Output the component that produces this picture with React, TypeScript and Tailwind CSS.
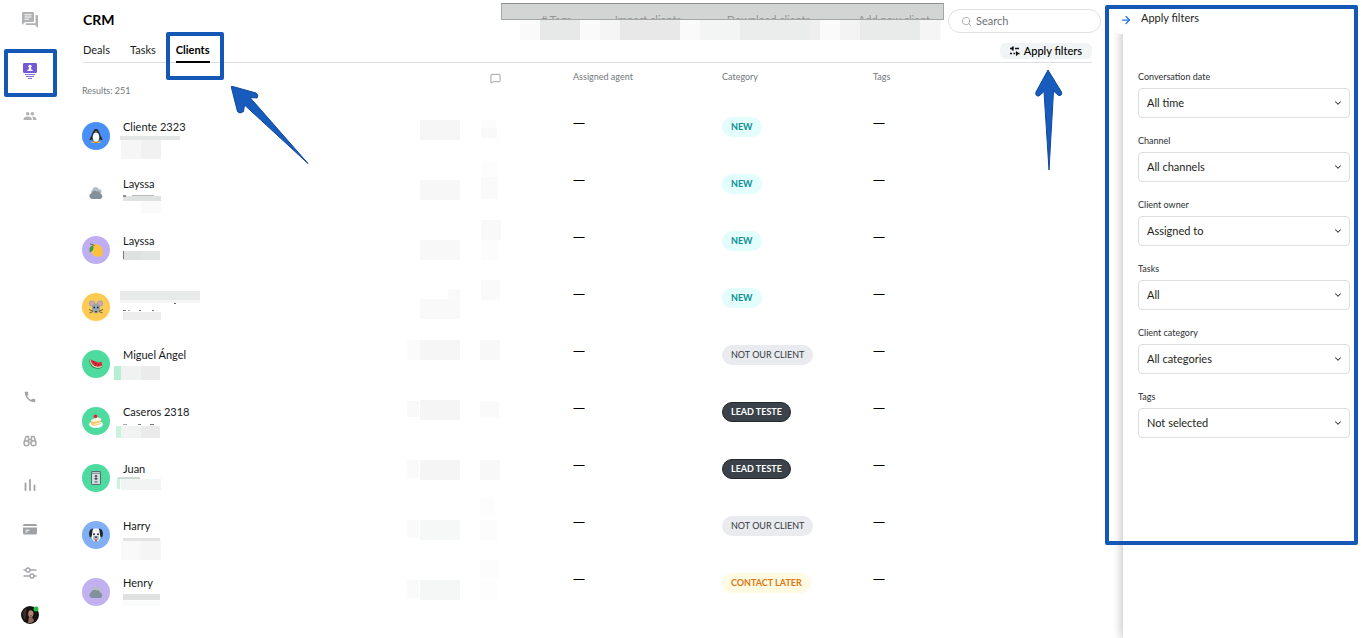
import type { ReactNode } from "react";
import clsx from "clsx";
import { MdCall, MdPeople } from "react-icons/md";
import { ArrowRight, ChevronDown, MessageSquare, Search } from "lucide-react";

type Rect = [x: number, y: number, width: number, height: number, fill: string];

const tabs = [
  { name: "Deals", current: false },
  { name: "Tasks", current: false },
  { name: "Clients", current: true },
];

const actions = [
  { name: "# Tags", className: "w-[110px]" },
  { name: "Import clients", className: "w-[74px]" },
  { name: "Download clients", className: "flex-1" },
  { name: "Add new client", className: "w-[84px]" },
];

const badgeStyles: Record<string, string> = {
  NEW: "px-[9px] bg-[#e3fdfc] text-[#0a8f92] font-bold",
  "NOT OUR CLIENT": "px-[9px] bg-[#e9ebee] text-[#343a40]",
  "LEAD TESTE": "px-2 border border-[#23282d] bg-[#3b4249] text-white font-bold",
  "CONTACT LATER": "px-[9px] bg-[#fffbe3] text-[#e0760f] font-bold",
};

const clients = [
  { name: "Cliente 2323", category: "NEW", avatar: "penguin", color: "bg-[#4a8ff5]" },
  { name: "Layssa", category: "NEW", avatar: "clouds", color: "bg-white" },
  { name: "Layssa", category: "NEW", avatar: "lemon", color: "bg-[#c0aef3]" },
  { name: "", category: "NEW", avatar: "mouse", color: "bg-[#fccb53]" },
  { name: "Miguel Ángel", category: "NOT OUR CLIENT", avatar: "melon", color: "bg-[#4edb9f]" },
  { name: "Caseros 2318", category: "LEAD TESTE", avatar: "cake", color: "bg-[#4edb9f]" },
  { name: "Juan", category: "LEAD TESTE", avatar: "bin", color: "bg-[#4edb9f]" },
  { name: "Harry", category: "NOT OUR CLIENT", avatar: "dog", color: "bg-[#80aff5]" },
  { name: "Henry", category: "CONTACT LATER", avatar: "clouds", color: "bg-[#c2b0f0]" },
];

const filters = [
  { id: "date", label: "Conversation date", value: "All time" },
  { id: "channel", label: "Channel", value: "All channels" },
  { id: "owner", label: "Client owner", value: "Assigned to" },
  { id: "tasks", label: "Tasks", value: "All" },
  { id: "category", label: "Client category", value: "All categories" },
  { id: "tags", label: "Tags", value: "Not selected" },
];

// censored areas of the list, measured from the top left of the table
const listMosaic: Rect[] = [
  [38, 73, 60, 4, "#e4e6e6"], [39, 77, 40, 19, "#f6f6f6"], [59, 77, 20, 19, "#f1f1f1"],
  [41, 133, 38, 5, "#e0e1e1"], [41, 132, 3, 2, "#8c9093"], [50, 132, 22, 1, "#b9bcbe"], [59, 138, 20, 12, "#fafafa"],
  [41, 188, 37, 9, "#dfe0e0"], [41, 188, 1, 8, "#777b7e"], [59, 188, 19, 9, "#e3e4e4"],
  [38, 228, 80, 9, "#e8e9e9"], [38, 237, 80, 3, "#f5f5f5"], [92, 240, 2, 1, "#666666"],
  [41, 247, 3, 1, "#777b7e"], [46, 247, 2, 1, "#a5a8aa"], [57, 247, 2, 1, "#777b7e"], [70, 247, 2, 1, "#777b7e"], [41, 249, 38, 8, "#ededed"],
  [32, 303, 7, 14, "#b5efd4"], [39, 303, 20, 14, "#f0f2f2"], [59, 303, 19, 14, "#ebebeb"],
  [41, 361, 4, 1, "#a5a8aa"], [56, 361, 3, 1, "#777b7e"], [68, 361, 4, 1, "#777b7e"], [34, 363, 5, 12, "#c9f2df"], [39, 363, 20, 12, "#f1f3f3"], [59, 363, 19, 12, "#ebebeb"],
  [35, 415, 3, 11, "#c9f2df"], [36, 414, 22, 2, "#cbdcd5"], [39, 416, 40, 11, "#f2f3f3"],
  [41, 475, 37, 3, "#e3e3e3"], [39, 478, 20, 19, "#f9f9f9"], [59, 478, 20, 19, "#f5f5f5"],
  [41, 531, 37, 6, "#e0e2e1"], [41, 538, 37, 5, "#fafbfb"],
  [338, 57, 40, 20, "#f6f6f6"], [338, 117, 40, 20, "#f7f7f7"], [338, 177, 40, 20, "#f8f8f8"],
  [366, 226, 12, 10, "#fafafa"], [338, 236, 40, 20, "#f9f9f9"],
  [325, 277, 13, 20, "#fbfbfb"], [338, 277, 40, 20, "#f6f6f6"],
  [325, 338, 12, 16, "#f9f9f9"], [338, 337, 40, 20, "#f5f5f5"],
  [325, 397, 12, 18, "#fafafa"], [338, 397, 40, 20, "#f5f5f5"],
  [325, 457, 12, 18, "#fafafa"], [338, 457, 40, 20, "#f6f8f8"],
  [325, 517, 12, 18, "#fafafa"], [338, 517, 40, 20, "#f5f7f6"],
  [399, 57, 15, 8, "#fcfcfc"], [399, 65, 16, 10, "#f9f9f9"],
  [399, 98, 17, 16, "#fdfdfd"], [399, 114, 17, 22, "#fafafa"],
  [399, 157, 20, 20, "#f9f9f9"], [399, 177, 17, 20, "#fcfcfc"], [399, 217, 19, 20, "#fafafa"],
  [398, 277, 20, 20, "#f8f8f8"], [398, 338, 19, 16, "#fafafa"], [398, 397, 20, 20, "#f8f8f8"],
  [398, 434, 15, 20, "#fdfdfd"], [398, 457, 17, 20, "#fcfcfc"],
  [398, 497, 19, 18, "#fcfcfc"], [398, 517, 17, 20, "#fdfdfd"],
];

const toolbarMosaic: Rect[] = [
  [19, 0, 421, 21, "#fafafa"], [39, 0, 40, 21, "#e7e8e8"], [99, 0, 20, 21, "#f5f5f5"],
  [119, 0, 60, 21, "#e8e8e8"], [199, 0, 40, 21, "#f3f4f4"], [239, 0, 70, 21, "#ebecec"],
  [309, 0, 10, 21, "#efefef"], [339, 0, 20, 21, "#f3f3f3"], [359, 0, 60, 21, "#e9eaea"],
  [419, 0, 20, 21, "#f5f5f5"],
];

function Mosaic({ rects, className }: { rects: Rect[]; className: string }) {
  return (
    <svg className={clsx("pointer-events-none absolute", className)} shapeRendering="crispEdges" aria-hidden="true">
      {rects.map(([x, y, width, height, fill]) => (
        <rect key={`${x}-${y}`} x={x} y={y} width={width} height={height} fill={fill} />
      ))}
    </svg>
  );
}

function Highlight({ className }: { className: string }) {
  return <div className={clsx("pointer-events-none absolute rounded-xs border-4 border-[#1557b5]", className)} />;
}

function ChatIcon() {
  return (
    <svg width="16" height="16" viewBox="0 0 16 16" fill="#b1b2b4">
      <path d="M1 0h10a1 1 0 0 1 1 1v8a1 1 0 0 1-1 1H3l-3 3V1a1 1 0 0 1 1-1Z" />
      <path d="M13.500 3H15a1 1 0 0 1 1 1v12l-3-3H4.500a1 1 0 0 1-1-1v-.7h10Z" />
      <path d="M2.500 2.800h7M2.500 5h7M2.500 7.200h4.500" stroke="#fff" />
    </svg>
  );
}

function ClientsIcon() {
  return (
    <svg width="14" height="16" viewBox="0 0 14 16">
      <rect width="14" height="10" rx="1.300" fill="#7359d6" />
      <circle cx="7" cy="3.300" r="1.600" fill="#fff" />
      <path d="M6.200 4.200h1.600l.7 2.500h1.100V8H4.400V6.700h1.100Z" fill="#fff" />
      <path d="M2 11.500h10M3 13.500h8M5 15.500h4" stroke="#8570dc" strokeWidth="1" />
    </svg>
  );
}

function BinocularsIcon() {
  return (
    <svg width="14" height="12" viewBox="0 0 14 12" fill="none" stroke="#a9aaac" strokeWidth="1.500">
      <circle cx="3.500" cy="8.200" r="2.500" />
      <circle cx="10.500" cy="8.200" r="2.500" />
      <path d="M1.200 7 3 1.500h2.500V8M12.800 7 11 1.500H8.500V8M5.500 4.500h3" />
    </svg>
  );
}

function BarsIcon() {
  return (
    <svg width="12" height="12" viewBox="0 0 12 12" stroke="#a3a4a6" strokeWidth="1.800" strokeLinecap="round">
      <path d="M1.500 4.500V11M6 1v10M10.500 6.500V11" />
    </svg>
  );
}

function CardIcon() {
  return (
    <svg width="14" height="12" viewBox="0 0 14 12" fill="#9fa1a5">
      <path d="M1.500 1h11A1.500 1.500 0 0 1 14 2.500V3H0v-.5A1.500 1.500 0 0 1 1.500 1ZM0 4.500h14V10a1.500 1.500 0 0 1-1.500 1.500h-11A1.500 1.500 0 0 1 0 10Z" />
      <path d="M2.500 7.200h4M2.500 9h2" stroke="#fff" />
    </svg>
  );
}

function SlidersIcon() {
  return (
    <svg width="14" height="12" viewBox="0 0 14 12" fill="none" stroke="#a3a5a8" strokeWidth="1.400">
      <path d="M.5 3H3M7 3h6.500M.5 9H7M11 9h2.500" />
      <circle cx="5" cy="3" r="2" />
      <circle cx="9" cy="9" r="2" />
    </svg>
  );
}

function FilterIcon() {
  return (
    <svg width="10" height="10" viewBox="0 0 10 10" fill="none" stroke="#111" strokeWidth="1.300">
      <path d="M0 2.500h2.500M5 2.500h4M3 .5v4M0 7.500h2M3.500 7.500h1.500M6.500 5.500v4M7 7.500h2.500" />
      <path d="M3 .5 1 2.500l2 2ZM6.500 5.500l2 2-2 2Z" fill="#111" strokeWidth=".3" />
    </svg>
  );
}

function UserAvatar() {
  return (
    <svg width="18" height="18" viewBox="0 0 18 18">
      <circle cx="9" cy="9" r="9" fill="#17120f" />
      <path d="M9.500 4.200c2 0 3.200 1.500 3 3.600-.2 2.300-1.400 4-3 4-1.500 0-2.400-1.700-2.300-4 .1-2.100.9-3.600 2.300-3.600Z" fill="#b08776" />
      <path d="M7.800 11.500h3.600l1.800 3.500-3 2H7Z" fill="#8d6658" />
      <path d="M1.500 8c.5-3 2-5 4-6l-1 12-1.500-1Z" fill="#3d2d27" />
      <path d="M8.800 9.800h2" stroke="#7c2f2e" />
      <circle cx="15" cy="3" r="2.500" fill="#20c13a" />
    </svg>
  );
}

const drawings: Record<string, ReactNode> = {
  penguin: (
    <>
      <path d="M3 6 .3 10.500l1.200.8L4 9ZM11 6l2.700 4.500-1.200.8L10 9Z" fill="#20242a" />
      <ellipse cx="7" cy="7.500" rx="4.400" ry="6" fill="#20242a" />
      <circle cx="7" cy="2.500" r="2.500" fill="#20242a" />
      <ellipse cx="7" cy="8.300" rx="3.300" ry="4.800" fill="#fff" />
      <path d="m5.800 2.300 1.200 1.200 1.200-1.200ZM2.500 12.600h4V14h-4ZM7.500 12.600h4V14h-4Z" fill="#e8a936" />
    </>
  ),
  clouds: (
    <>
      <path d="M4 8a2.500 2.500 0 0 1-.5-4.500A3 3 0 0 1 6.500 1a3 3 0 0 1 3 2 2.500 2.500 0 0 1 2.800 3.500L12 8Z" fill="#b4bec3" />
      <path d="M3 13a3 3 0 0 1-.7-5.800A3.400 3.400 0 0 1 7.500 5.400a3 3 0 0 1 3.700 2.100A2.900 2.900 0 0 1 11.500 13Z" fill="#82909a" />
    </>
  ),
  lemon: (
    <>
      <path d="M3.500 1.800c3-1 8-.7 9.700 3.500.6 1.900.2 3.800.5 6.500-.8 1.400-1.700 1.500-2.900 1.700-4.500.7-8.500-1.300-8.600-5.700 0-2.500.2-4.500 1.300-6Z" fill="#fbc13e" />
      <path d="M4 2.500C1 3-.3 5.500.8 9.500 3.500 8.500 5.500 6 4 2.500Z" fill="#3e9b4a" />
      <path d="M5.500 2.500 1 .8" stroke="#5b6b36" />
    </>
  ),
  mouse: (
    <>
      <circle cx="3" cy="3.500" r="3" fill="#98a5ae" />
      <circle cx="11" cy="3.500" r="3" fill="#98a5ae" />
      <circle cx="3" cy="3.500" r="1.900" fill="#eba0a9" />
      <circle cx="11" cy="3.500" r="1.900" fill="#eba0a9" />
      <path d="M7 3.500c3 0 4.500 2.500 4 5-.5 2.500-2.300 5-4 5s-3.500-2.500-4-5c-.5-2.500 1-5 4-5Z" fill="#98a5ae" />
      <circle cx="5.200" cy="7.500" r=".9" fill="#26323a" />
      <circle cx="8.800" cy="7.500" r=".9" fill="#26323a" />
      <path d="M0 9.500 4 11M.5 13 4 11.500M14 9.500 10 11M13.500 13 10 11.500" stroke="#26323a" strokeWidth=".7" />
      <path d="M5.800 11h2.400L7 13Z" fill="#3a2a2d" />
    </>
  ),
  melon: (
    <>
      <path d="M.3 2.500c-.3 5.500 3.500 9.300 8.500 9.300 2.700 0 4.400-1.200 5-2.700Z" fill="#2f7a3e" />
      <path d="M.9 2.400c0 5 3.800 8.400 8.300 8.300 2.200 0 3.700-.8 4.200-1.800Z" fill="#f4e9cf" />
      <path d="M1.500 2.300c.2 4.500 3.600 7.400 7.600 7.400 1.900 0 3.200-.5 3.900-1.200.2-1.500-.2-3-.8-4L10 5.500C7.500 5 3.500 3.500 1.500 2.300Z" fill="#d92c3c" />
      <path d="M4 5h.8M6.500 6.300h.8M9 8h.8M6 8.200h.8" stroke="#4b1219" />
    </>
  ),
  cake: (
    <>
      <ellipse cx="7" cy="10.500" rx="6.900" ry="3.400" fill="#fff" />
      <path d="M2 6.500 12 4.500V10l-7 2-3-1.500Z" fill="#fbc765" />
      <path d="M2 6 8 3l4.200 1.800v1.400L5 8 2 7.200ZM5 10l7.200-2v1L5 11Z" fill="#fff5e0" />
      <circle cx="6.500" cy="2.300" r="1.900" fill="#d92c3c" />
    </>
  ),
  bin: (
    <>
      <rect x="2" y="0" width="10" height="14" rx="1.500" fill="#5d6b74" />
      <rect x="3" y="3" width="8" height="10" fill="#d5dce0" />
      <rect x="3" y="1" width="8" height="1.500" fill="#bcc6cb" />
      <circle cx="7" cy="5.200" r="1.200" fill="#46535b" />
      <path d="M5 7h4l-2 2.500ZM5.500 11.500h3v-1h-3Z" fill="#46535b" />
    </>
  ),
  dog: (
    <>
      <path d="M7 .5c4 0 5.500 2.500 5.200 6-.3 3.500-2.200 7-5.200 7s-4.900-3.500-5.200-7C1.500 3 3 .5 7 .5Z" fill="#f5f6f7" />
      <path d="M4 .5C1.500.3-.2 3 .1 6.500c.2 2 .9 3.300 2 3C3.300 8 3 4 4 .5ZM10 .5c2.500-.2 4.200 2.500 3.900 6-.2 2-.9 3.300-2 3C10.700 8 11 4 10 .5Z" fill="#20272c" />
      <circle cx="5" cy="6.300" r="1" fill="#20272c" />
      <circle cx="9" cy="6.300" r="1" fill="#20272c" />
      <ellipse cx="7" cy="10" rx="3" ry="2.300" fill="#aab4ba" />
      <path d="M5.500 8.500h3L7 10.300Z" fill="#20272c" />
      <path d="M6 11.500h2v2H6Z" fill="#dc4452" />
    </>
  ),
};

function ClientAvatar({ name, color }: { name: string; color: string }) {
  return (
    <span className={clsx("flex size-7 shrink-0 items-center justify-center rounded-full", color)}>
      <svg width="14" height="14" viewBox="0 0 14 14" fill="none">
        {drawings[name]}
      </svg>
    </span>
  );
}

function Sidebar() {
  return (
    <nav className="flex w-[60px] shrink-0 flex-col pb-[3px]" aria-label="Main">
      <a href="#" aria-label="Chats" className="flex h-10 items-center justify-center">
        <ChatIcon />
      </a>
      <a href="#" aria-label="CRM" className="relative mt-2 flex h-[46px] items-center justify-center">
        <ClientsIcon />
        <Highlight className="-bottom-[3px] left-1 right-[3px] top-px" />
      </a>
      <a href="#" aria-label="Team" className="mt-1 flex h-9 items-center justify-center text-[#b1b2b4]">
        <MdPeople size={14} />
      </a>
      <div className="mt-auto flex flex-col text-[#a3a4a6]">
        <a href="#" aria-label="Calls" className="flex h-11 items-center justify-center">
          <MdCall size={14} />
        </a>
        <a href="#" aria-label="Explore" className="flex h-11 items-center justify-center">
          <BinocularsIcon />
        </a>
        <a href="#" aria-label="Reports" className="flex h-11 items-center justify-center">
          <BarsIcon />
        </a>
        <a href="#" aria-label="Billing" className="flex h-11 items-center justify-center">
          <CardIcon />
        </a>
        <a href="#" aria-label="Settings" className="flex h-11 items-center justify-center">
          <SlidersIcon />
        </a>
        <a href="#" aria-label="Profile" className="flex h-10 items-center justify-center">
          <UserAvatar />
        </a>
      </div>
    </nav>
  );
}

function Header() {
  return (
    <header className="relative border-b border-[#dcdfe1]">
      <div className="flex h-10 items-center">
        <h1 className="text-sm font-bold text-black">CRM</h1>
        <div className="relative ml-auto flex h-10 w-[443px] items-center pr-2 text-[11px] text-[#25282a]">
          {actions.map((action) => (
            <button key={action.name} className={clsx("whitespace-nowrap text-center", action.className)}>
              {action.name}
            </button>
          ))}
          <Mosaic rects={toolbarMosaic} className="left-0 top-5 h-5 w-full" />
          <div className="absolute inset-x-0 top-[3px] h-[17px] border border-[#a5a7a7] border-t-[#8e9090] bg-[#c0c2c2]/70" />
        </div>
        <label className="-mr-[9px] ml-1 mt-[2px] flex h-6 w-[153px] items-center gap-1 rounded-full border border-[#dfe1e3] pl-3">
          <Search size={11} className="shrink-0 text-[#8e9194]" strokeWidth={1.5} />
          <input
            type="text"
            aria-label="Search"
            placeholder="Search"
            className="w-full text-[11px] outline-none placeholder:text-[#6f7377]"
          />
        </label>
      </div>
      <div className="flex h-[22px] items-center justify-between">
        <div className="flex gap-5 self-stretch text-[11px]">
          {tabs.map((tab) => (
            <a
              key={tab.name}
              href="#"
              aria-current={tab.current ? "page" : undefined}
              className={clsx(
                "relative h-[23px] leading-5",
                tab.current ? "border-b-2 border-black font-bold text-black" : "text-[#1c1e20]",
              )}
            >
              {tab.name}
              {tab.current && <Highlight className="-left-2.5 -right-3.5 -top-2 h-12" />}
            </a>
          ))}
        </div>
        <button className="flex h-4 items-center gap-1 rounded-md bg-[#f1f4f4] px-2.5 text-[11px] font-medium text-black">
          <FilterIcon />
          Apply filters
        </button>
      </div>
      <svg className="pointer-events-none absolute left-[148px] top-[86px] z-10" width="80" height="80" viewBox="0 0 80 80">
        <path d="M0 0 25 7q3 2 1 5l-7-.5L77 77.500 13.500 19l-1 6.500q-4 3-6 0Z" fill="#175bbd" stroke="#11489b" strokeLinejoin="round" />
      </svg>
      <svg className="pointer-events-none absolute right-[29px] top-[69px] z-10" width="28" height="104" viewBox="0 0 28 104">
        <path d="M13 1 26.500 23q1 4-3 3.500L18.500 22 14 101 9 22.500 4 27q-4 .5-3-4Z" fill="#175bbd" stroke="#11489b" strokeLinejoin="round" />
      </svg>
    </header>
  );
}

function ClientTable() {
  return (
    <div className="relative">
      <table className="-ml-px w-full table-fixed text-left">
        <colgroup>
          <col />
          <col className="w-[83px]" />
          <col className="w-[83px]" />
          <col className="w-[149px]" />
          <col className="w-[151px]" />
          <col className="w-[218px]" />
        </colgroup>
        <thead className="align-top text-[9px] leading-3 text-[#74787c]">
          <tr className="h-11">
            <th className="pt-[22px] font-normal">Results: 251</th>
            <th aria-label="Contact" />
            <th aria-label="Messages" className="pt-2.5">
              <MessageSquare size={11} strokeWidth={1.5} />
            </th>
            <th className="pt-2 font-normal">Assigned agent</th>
            <th className="pt-2 font-normal">Category</th>
            <th className="pt-2 font-normal">Tags</th>
          </tr>
        </thead>
        <tbody className="align-top text-[11px] text-[#16181a]">
          {clients.map((client, i) => (
            <tr key={i} className="h-[57px]">
              <td>
                <div className="flex gap-[13px] pt-[15px]">
                  <ClientAvatar name={client.avatar} color={client.color} />
                  <span className="-mt-[3px] leading-4">{client.name}</span>
                </div>
              </td>
              <td />
              <td />
              <td className="pt-2 font-['Open_Sans',sans-serif] text-xs leading-4 text-black">—</td>
              <td className="pt-2.5">
                <span
                  className={clsx(
                    "inline-flex h-5 items-center rounded-full text-[9px]",
                    badgeStyles[client.category],
                  )}
                >
                  {client.category}
                </span>
              </td>
              <td className="pt-2 font-['Open_Sans',sans-serif] text-xs leading-4 text-black">—</td>
            </tr>
          ))}
        </tbody>
      </table>
      <Mosaic rects={listMosaic} className="-left-px top-0 h-full w-[460px]" />
    </div>
  );
}

function FilterPanel() {
  return (
    <aside className="relative w-[239px] shrink-0 bg-white pl-[15px] pr-3 shadow-[-2px_0_9px_rgba(0,0,0,0.22)]">
      <button
        aria-label="Close filters"
        className="absolute -left-2.5 top-0 flex h-[34px] w-7 items-end rounded-bl-lg bg-white pb-2 pl-[7px]"
      >
        <ArrowRight size={12} className="text-[#2470e8]" strokeWidth={2.5} />
      </button>
      <h2 className="pl-[3px] pt-2.5 text-[11px] leading-4 text-[#1c1e20]">Apply filters</h2>
      <form className="mt-[43px] flex flex-col gap-[15px]">
        {filters.map((filter) => (
          <div key={filter.id} className="flex flex-col gap-[3px]">
            <label htmlFor={filter.id} className="text-[9px] leading-4 text-[#2b2e31]">
              {filter.label}
            </label>
            <div className="relative">
              <select
                id={filter.id}
                className="h-[30px] w-full appearance-none rounded-sm border border-[#dcdfe2] bg-white px-2 text-[11px] text-[#1c1e20]"
              >
                <option>{filter.value}</option>
              </select>
              <ChevronDown size={10} strokeWidth={2.5} className="pointer-events-none absolute right-[7px] top-2.5 text-[#33373b]" />
            </div>
          </div>
        ))}
      </form>
      <Highlight className="-left-[18px] right-1 top-[5px] h-[540px]" />
    </aside>
  );
}

export default function App() {
  return (
    <div className="flex min-h-screen overflow-hidden bg-white font-['Lato','Noto_Sans',sans-serif]">
      <Sidebar />
      <main className="min-w-0 flex-1 pl-[23px] pr-[31px]">
        <Header />
        <ClientTable />
      </main>
      <FilterPanel />
    </div>
  );
}
